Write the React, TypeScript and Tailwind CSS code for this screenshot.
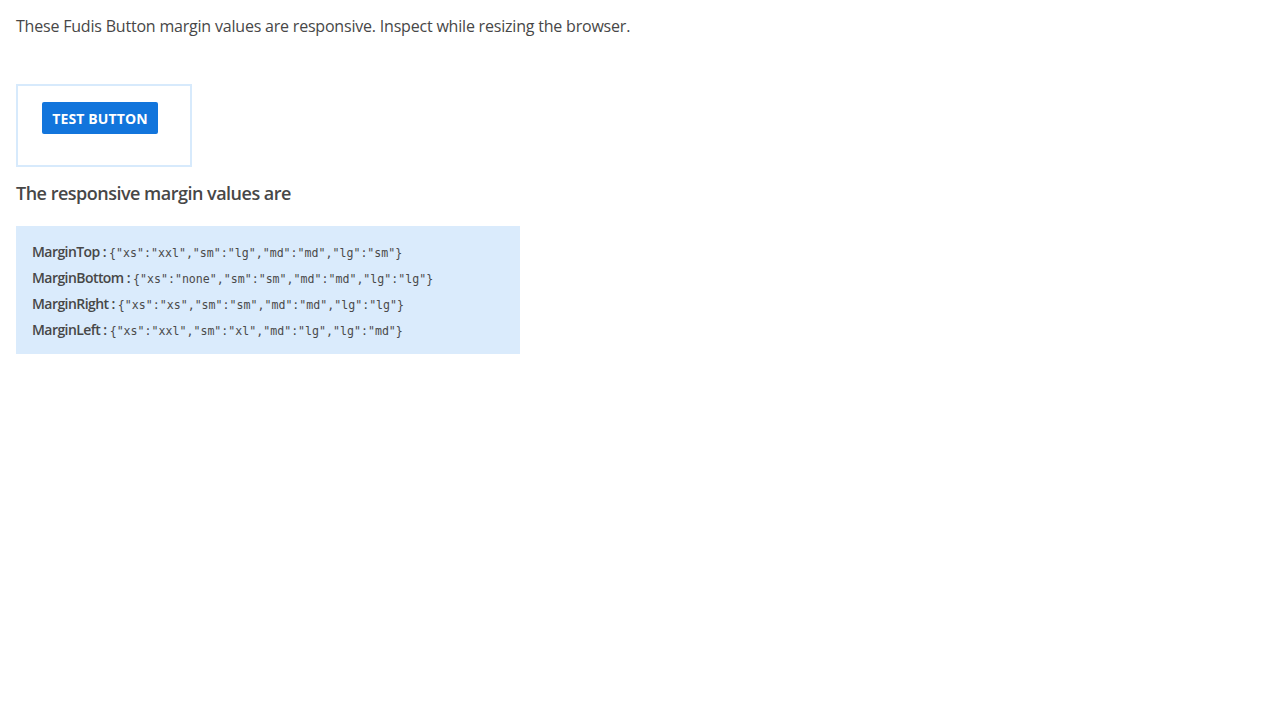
const sans = "font-['Open_Sans','Noto_Sans',sans-serif]"
const mono = "font-['DejaVu_Sans_Mono','Liberation_Mono',monospace]"

const margins = [
  { label: "MarginTop", value: '{"xs":"xxl","sm":"lg","md":"md","lg":"sm"}' },
  { label: "MarginBottom", value: '{"xs":"none","sm":"sm","md":"md","lg":"lg"}' },
  { label: "MarginRight", value: '{"xs":"xs","sm":"sm","md":"md","lg":"lg"}' },
  { label: "MarginLeft", value: '{"xs":"xxl","sm":"xl","md":"lg","lg":"md"}' },
]

export default function App() {
  return (
    <div className={`${sans} min-h-[720px] bg-white px-4 pt-[14px] text-[#474747]`}>
      <p className="text-[16px] leading-6 tracking-[-0.0125em]">
        These Fudis Button margin values are responsive. Inspect while resizing the browser.
      </p>

      <div className="mt-[46px] inline-block w-[176px] border-2 border-[#d7eafc] pb-[31px] pl-6 pt-4">
        <button
          type="button"
          className="h-8 w-[116px] rounded-[2px] bg-[#1275dc] text-[14px] font-bold tracking-[0.01em] text-white"
        >
          TEST BUTTON
        </button>
      </div>

      <h2 className="mt-[14px] text-[18px] font-semibold leading-6 tracking-[-0.028em]">
        The responsive margin values are
      </h2>

      <div className="mt-[21px] w-[504px] bg-[#daebfc] px-4 pb-[12px] pt-[12px]">
        {margins.map((m) => (
          <div key={m.label} className="flex h-[26px] items-baseline gap-[3px] pt-[3px]">
            <span className="text-[14px] font-semibold tracking-[-0.04em]">{m.label} :</span>
            <span className={`${mono} text-[11.6px] text-[#4a4a4a]`}>{m.value}</span>
          </div>
        ))}
      </div>
    </div>
  )
}
